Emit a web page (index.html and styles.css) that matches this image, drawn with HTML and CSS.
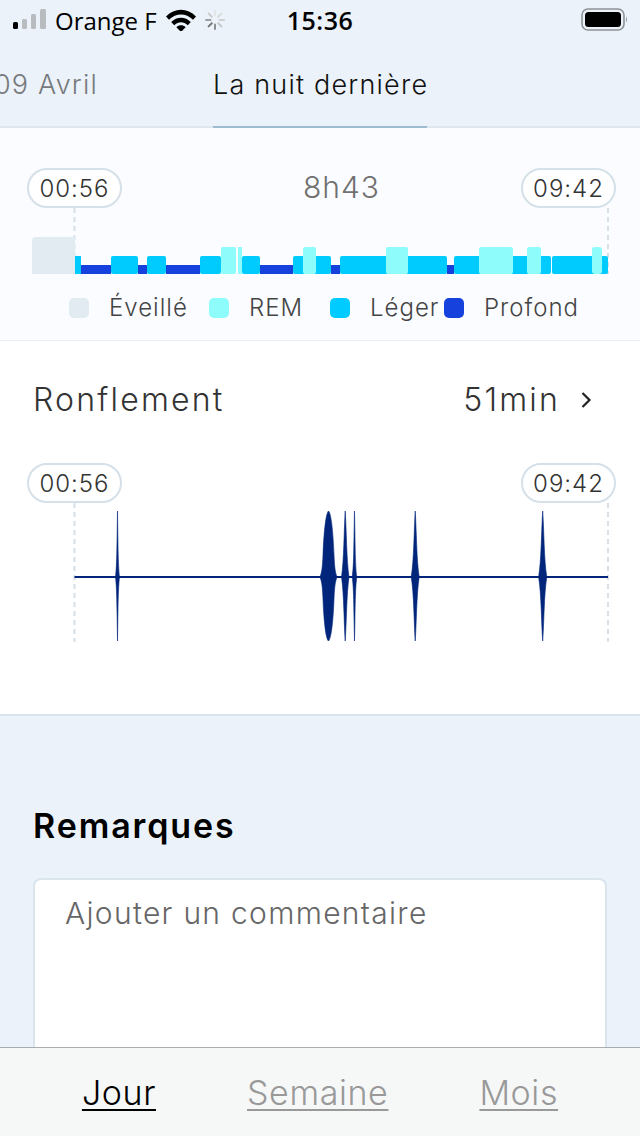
FILE: index.html
```html
<!DOCTYPE html>
<html lang="fr">
<head>
    <meta charset="UTF-8">
    <meta name="viewport" content="width=device-width, initial-scale=1.0">
    <title>La nuit dernière</title>
    <link rel="stylesheet" href="styles.css">
</head>
<body>

<div class="screen">
    <div class="status-bar">
        <div class="status-left">
            <svg class="signal" width="34" height="22" viewBox="0 0 34 22">
                <rect x="0" y="13" width="5" height="7" rx="1.5" fill="#000"/>
                <rect x="9" y="10" width="5" height="10" rx="1.5" fill="#b8bcbf"/>
                <rect x="18" y="5" width="5" height="15" rx="1.5" fill="#b8bcbf"/>
                <rect x="27" y="0" width="6" height="20" rx="1.5" fill="#b8bcbf"/>
            </svg>
            <span class="carrier">Orange F</span>
            <svg class="wifi" width="30" height="22" viewBox="0 0 30 22">
                <path d="M0 7.5 C8.5 -1.5 21.5 -1.5 30 7.5 L27 10.8 C20 3.6 10 3.6 3 10.8 Z" fill="#000"/>
                <path d="M5.2 13 C10.8 7.2 19.2 7.2 24.8 13 L21.8 16.2 C17.8 12.2 12.2 12.2 8.2 16.2 Z" fill="#000"/>
                <path d="M10.4 18.2 C13 15.6 17 15.6 19.6 18.2 L15 23 Z" fill="#000"/>
            </svg>
            <svg class="spinner" width="20" height="20" viewBox="0 0 20 20" stroke-width="2" stroke-linecap="round">
                <path d="M10 1 V5.5" stroke="#e3e5e6"/>
                <path d="M16.4 3.6 L13.2 6.8" stroke="#d8dadb"/>
                <path d="M19 10 H14.5" stroke="#cfd1d2"/>
                <path d="M16.4 16.4 L13.2 13.2" stroke="#c4c6c7"/>
                <path d="M10 19 V14.5" stroke="#8b8e90"/>
                <path d="M3.6 16.4 L6.8 13.2" stroke="#74777a"/>
                <path d="M1 10 H5.5" stroke="#9c9fa1"/>
                <path d="M3.6 3.6 L6.8 6.8" stroke="#c9cbcc"/>
            </svg>
        </div>
        <div class="clock">15:36</div>
        <div class="status-right">
            <svg width="46" height="24" viewBox="0 0 46 24">
                <rect x="1" y="1" width="42" height="21" rx="6" fill="none" stroke="#8f9396" stroke-width="1.6"/>
                <rect x="4" y="4" width="36" height="15" rx="3.5" fill="#000"/>
                <path d="M45 8.5 C46.2 9.5 46.2 13.5 45 14.5 Z" fill="#8f9396"/>
            </svg>
        </div>
    </div>

    <div class="day-tabs">
        <div class="day-tab">09 Avril</div>
        <div class="day-tab day-tab-active">La nuit dernière</div>
    </div>

    <section class="sleep-panel">
        <div class="chart-head">
            <div class="time-pill">00:56</div>
            <div class="duration">8h43</div>
            <div class="time-pill">09:42</div>
        </div>
        <svg class="chart" width="640" height="66" viewBox="0 208 640 66">
            <path d="M74.5 208 V274 M608 208 V274" stroke="#d5e0e9" stroke-width="2" stroke-dasharray="5 4" fill="none"/>
            <path d="M32 274 V241 Q32 237 36 237 H75 V274 Z" fill="#e3ebf2"/>
            <g fill="#1741dc">
                <rect x="81" y="265" width="30" height="9"/>
                <rect x="138" y="265" width="9" height="9"/>
                <rect x="166" y="265" width="34" height="9"/>
                <rect x="260" y="265" width="33" height="9"/>
                <rect x="331" y="265" width="9" height="9"/>
                <rect x="447" y="265" width="7" height="9"/>
            </g>
            <g fill="#00cbff">
                <rect x="75" y="256" width="6" height="18"/>
                <rect x="111" y="256" width="27" height="18" rx="2"/>
                <rect x="147" y="256" width="19" height="18" rx="2"/>
                <rect x="200" y="256" width="21" height="18" rx="2"/>
                <rect x="242" y="256" width="18" height="18" rx="2"/>
                <rect x="293" y="256" width="38" height="18" rx="2"/>
                <rect x="340" y="256" width="107" height="18" rx="2"/>
                <rect x="454" y="256" width="97" height="18" rx="2"/>
                <rect x="552" y="256" width="56" height="18" rx="2"/>
            </g>
            <g fill="#8dfcfb">
                <rect x="221" y="247" width="15" height="27" rx="2"/>
                <rect x="238" y="247" width="4" height="27"/>
                <rect x="303" y="247" width="13" height="27" rx="2"/>
                <rect x="386" y="247" width="22" height="27" rx="2"/>
                <rect x="479" y="247" width="34" height="27" rx="2"/>
                <rect x="527" y="247" width="14" height="27" rx="2"/>
                <rect x="592" y="247" width="10" height="27" rx="3"/>
            </g>
        </svg>
        <div class="legend">
            <div class="legend-item"><span class="swatch swatch-awake"></span>Éveillé</div>
            <div class="legend-item"><span class="swatch swatch-rem"></span>REM</div>
            <div class="legend-item"><span class="swatch swatch-light"></span>Léger</div>
            <div class="legend-item"><span class="swatch swatch-deep"></span>Profond</div>
        </div>
    </section>

    <section class="snore-panel">
        <div class="snore-row">
            <div class="snore-title">Ronflement</div>
            <div class="snore-value">
                51min
                <svg width="12" height="18" viewBox="0 0 12 18">
                    <path d="M2.5 2 L9.5 9 L2.5 16" fill="none" stroke="#222" stroke-width="2.2"/>
                </svg>
            </div>
        </div>
        <div class="chart-head chart-head-snore">
            <div class="time-pill">00:56</div>
            <div class="time-pill">09:42</div>
        </div>
        <svg class="chart" width="640" height="139" viewBox="0 503 640 139">
            <path d="M74.5 503 V642 M608 503 V642" stroke="#d5e0e9" stroke-width="2" stroke-dasharray="5 4" fill="none"/>
            <rect x="74.5" y="576" width="533.5" height="2" fill="#00257a"/>
            <g fill="#00257a" stroke="#00257a" stroke-width="0.6">
                <!-- spikes: tip, shoulder at the middle line, tip -->
                <path d="M117.5 511 C118 540 118 565 119.5 577 C118 589 118 614 117.5 641 C117 614 117 589 115.5 577 C117 565 117 540 117.5 511 Z"/>
                <path d="M328.5 511 C331 513 333 530 334 555 C334.5 566 335 572 337 577 C335 582 334.5 588 334 599 C333 624 331 639 328.5 641 C326 639 324 624 323 599 C322.5 588 322 582 320 577 C322 572 322.5 566 323 555 C324 530 326 513 328.5 511 Z"/>
                <path d="M345.2 511 C346.5 530 346.5 560 349 577 C346.5 594 346.5 624 345.2 641 C344 624 344 594 341.5 577 C344 560 344 530 345.2 511 Z"/>
                <path d="M354.5 511 C355.2 540 355 565 356.8 577 C355 589 355.2 614 354.5 641 C353.8 614 354 589 352.2 577 C354 565 353.8 540 354.5 511 Z"/>
                <path d="M415.2 511 C416.5 530 416.5 560 419.2 577 C416.5 594 416.5 624 415.2 641 C414 624 414 594 411.2 577 C414 560 414 530 415.2 511 Z"/>
                <path d="M542.7 511 C544 530 544 560 546.8 577 C544 594 544 624 542.7 641 C541.4 624 541.4 594 538.6 577 C541.4 560 541.4 530 542.7 511 Z"/>
            </g>
        </svg>
    </section>

    <section class="notes">
        <h2 class="notes-title">Remarques</h2>
        <div class="notes-box">Ajouter un commentaire</div>
    </section>

    <nav class="range-bar">
        <a class="range-link range-link-active">Jour</a>
        <a class="range-link">Semaine</a>
        <a class="range-link">Mois</a>
    </nav>
</div>

</body>
</html>
```

FILE: styles.css
```css
html, body {
    margin: 0;
    padding: 0;
}
body {
    font-family: Inter, "Open Sans", sans-serif;
    font-weight: 300;
    background-color: #ebf2f9;
    color: #333;
}
svg {
    display: block;
}
.screen {
    position: relative;
    width: 640px;
    height: 1136px;
    overflow: hidden;
}

/* status bar */
.status-bar {
    display: grid;
    grid-template-columns: 1fr auto 1fr;
    align-items: center;
    height: 40px;
    padding: 0 13px 0 13px;
    color: #000;
    font-family: "Open Sans", sans-serif;
    font-size: 24px;
    font-weight: 500;
}
.status-left {
    display: flex;
    align-items: center;
}
.signal {
    margin-right: 8px;
}
.wifi {
    margin-left: 9px;
}
.spinner {
    margin-left: 9px;
}
.clock {
    font-weight: 600;
    font-size: 25px;
    letter-spacing: 0.5px;
}
.status-right {
    display: flex;
    justify-content: flex-end;
}

/* day tabs */
.day-tabs {
    display: flex;
    gap: 60px;
    margin-left: -61px;
    height: 88px;
    width: 701px;
    box-sizing: border-box;
    border-bottom: 2px solid #dfe7ee;
}
.day-tab {
    width: 214px;
    height: 88px;
    box-sizing: border-box;
    padding-top: 26px;
    text-align: center;
    font-size: 27px;
    line-height: 38px;
    font-weight: 300;
    letter-spacing: 1.2px;
    color: #777a7d;
    white-space: nowrap;
}
.day-tab-active {
    color: #111;
    border-bottom: 2px solid #9cbcd0;
}

/* sleep chart */
.sleep-panel {
    height: 213px;
    box-sizing: border-box;
    padding-top: 40px;
    background-color: #fafcff;
    border-bottom: 1px solid #e9eff5;
}
.chart-head {
    display: flex;
    justify-content: space-between;
    align-items: center;
    padding: 0 24px 0 27px;
}
.time-pill {
    width: 95px;
    height: 40px;
    box-sizing: border-box;
    border: 2px solid #d5e0e9;
    border-radius: 20px;
    background-color: #fff;
    text-align: center;
    font-size: 24px;
    line-height: 37px;
    letter-spacing: 1px;
    color: #333;
}
.duration {
    font-size: 30px;
    line-height: 36px;
    padding-bottom: 2px;
    letter-spacing: 1px;
    color: #707070;
    padding-left: 40px;
}
.legend {
    display: grid;
    grid-template-columns: 140px 121px 114px auto;
    padding: 24px 0 0 69px;
}
.legend-item {
    display: flex;
    align-items: center;
    gap: 20px;
    font-size: 24px;
    line-height: 20px;
    letter-spacing: 1px;
    color: #444;
}
.swatch {
    width: 20px;
    height: 20px;
    border-radius: 5px;
}
.swatch-awake { background-color: #e3ebf2; }
.swatch-rem { background-color: #8dfcfb; }
.swatch-light { background-color: #00cbff; }
.swatch-deep { background-color: #1741dc; }

/* snoring */
.snore-panel {
    height: 375px;
    box-sizing: border-box;
    background-color: #fff;
    border-bottom: 2px solid #d9e3eb;
}
.snore-row {
    display: flex;
    justify-content: space-between;
    align-items: center;
    height: 122px;
    box-sizing: border-box;
    padding: 0 48px 5px 33px;
    font-size: 32px;
    font-weight: 300;
    letter-spacing: 2.2px;
    color: #333;
}
.snore-value {
    display: flex;
    align-items: center;
    gap: 20px;
}
.chart-head-snore {
    height: 40px;
}

/* notes */
.notes {
    padding: 85px 33px 0 33px;
}
.notes-title {
    margin: 0 0 27px 0;
    font-size: 34px;
    line-height: 50px;
    font-weight: 600;
    letter-spacing: 1.9px;
    color: #000;
}
.notes-box {
    height: 240px;
    box-sizing: border-box;
    padding: 15px 30px;
    border: 2px solid #d9e4ed;
    border-radius: 8px;
    background-color: #fff;
    font-size: 30px;
    line-height: 36px;
    letter-spacing: 1.3px;
    color: #666;
}

/* bottom bar, sits over the notes box */
.range-bar {
    position: absolute;
    left: 0;
    right: 0;
    bottom: 0;
    height: 89px;
    box-sizing: border-box;
    border-top: 1px solid #a9adb0;
    background-color: #f6f7f7;
    display: flex;
    justify-content: center;
    gap: 91px;
    padding-top: 24px;
    font-size: 34px;
    line-height: 42px;
    letter-spacing: 0.6px;
}
.range-link {
    color: #999;
    text-decoration: underline;
    text-decoration-thickness: 2px;
    text-underline-offset: 4px;
}
.range-link-active {
    color: #000;
}
```
